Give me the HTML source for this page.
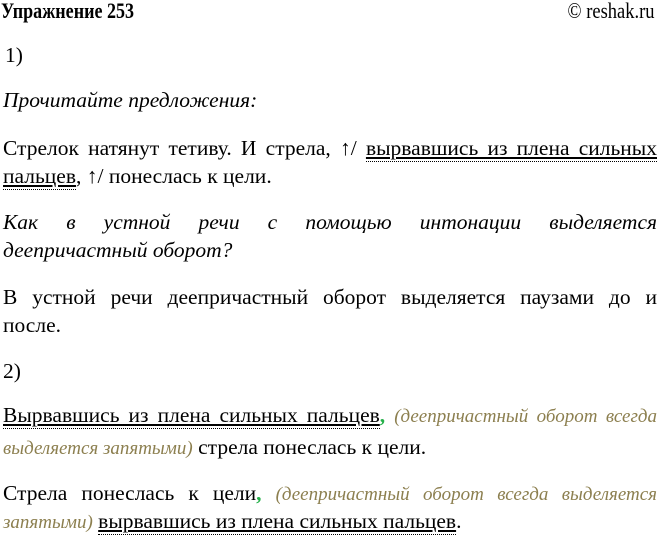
<!DOCTYPE html>
<html><head><meta charset="utf-8"><style>
body{margin:0;width:657px;height:534px;background:#fff;position:relative;overflow:hidden;font-family:"Liberation Serif","Noto Serif CJK SC",serif;color:#000}
.l{position:absolute;left:3px;width:654px;font-size:21.5px;line-height:28px;white-space:nowrap}
.j{text-align:justify;text-align-last:justify;white-space:normal}
i{font-style:italic}
.u{text-decoration:underline;text-underline-offset:2px;border-bottom:1.5px dotted #000;padding-bottom:1px}
.c{color:#8c7f4f;font-style:italic;font-size:19px}
.g{color:#25b04a;font-weight:bold}
</style></head><body>
<div class="l" style="top:-3px;left:1px;width:auto;font-weight:bold;font-size:22px;transform:scaleX(0.82);transform-origin:left">Упражнение 253</div>
<div class="l" style="top:-3px;left:auto;right:3px;width:auto;font-size:22px;transform:scaleX(0.84);transform-origin:right">© reshak.ru</div>
<div class="l" style="top:41px;left:5px">1)</div>
<div class="l" style="top:86px"><i>Прочитайте предложения:</i></div>
<div class="l j" style="top:134px">Стрелок натянут тетиву. И стрела, ↑/ <span class="u">вырвавшись из плена сильных</span></div>
<div class="l" style="top:162px"><span class="u">пальцев</span>, ↑/ понеслась к цели.</div>
<div class="l j" style="top:208px"><i>Как в устной речи с помощью интонации выделяется</i></div>
<div class="l" style="top:236px"><i>деепричастный оборот?</i></div>
<div class="l j" style="top:283px">В устной речи деепричастный оборот выделяется паузами до и</div>
<div class="l" style="top:311px">после.</div>
<div class="l" style="top:357px">2)</div>
<div class="l j" style="top:401px"><span class="u">Вырвавшись из плена сильных пальцев</span><span class="g">,</span> <span class="c">(деепричастный оборот всегда</span></div>
<div class="l" style="top:433px"><span class="c">выделяется запятыми)</span> стрела понеслась к цели.</div>
<div class="l j" style="top:479px">Стрела понеслась к цели<span class="g">,</span> <span class="c">(деепричастный оборот всегда выделяется</span></div>
<div class="l" style="top:507px"><span class="c">запятыми)</span> <span class="u">вырвавшись из плена сильных пальцев</span>.</div>
</body></html>
